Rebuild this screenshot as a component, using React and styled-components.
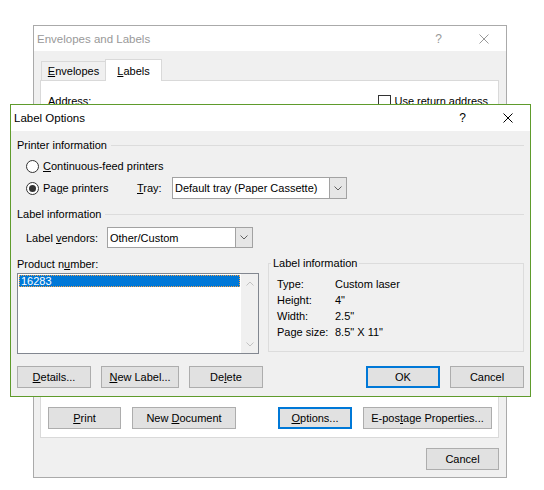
import React from 'react'
import styled, { createGlobalStyle, css } from 'styled-components'

const GlobalStyle = createGlobalStyle`
  html, body {
    margin: 0;
    padding: 0;
    background: #fff;
  }
  body {
    font-family: 'Liberation Sans', Arial, sans-serif;
    font-size: 11px;
    color: #000;
  }
  * {
    box-sizing: border-box;
  }
`

const Desktop = styled.div`
  position: relative;
  width: 544px;
  height: 490px;
  overflow: hidden;
  background: #fff;
`

const Window = styled.div`
  position: absolute;
  left: ${p => p.$left}px;
  top: ${p => p.$top}px;
  width: ${p => p.$width}px;
  height: ${p => p.$height}px;
  border: 1px solid ${p => p.$frame};
  background: #f0f0f0;
  display: flex;
  flex-direction: column;
`

const TitleBar = styled.div`
  display: flex;
  align-items: center;
  height: ${p => p.$height}px;
  flex-shrink: 0;
  background: #fff;
  padding-left: 3px;
  color: ${p => (p.$inactive ? '#999' : '#000')};
`

const TitleText = styled.span`
  flex: 1;
  font-size: 11.5px;
`

const CaptionButton = styled.div`
  width: 45px;
  height: 100%;
  display: flex;
  align-items: center;
  justify-content: center;
  font-size: 12px;
`

/* ---- Envelopes and Labels (behind) ---- */

const BackBody = styled.div`
  flex: 1;
  display: flex;
  flex-direction: column;
  padding: 7px 7px 7px 6px;
`

const TabStrip = styled.div`
  display: flex;
  align-items: flex-end;
  height: 22px;
  padding-left: 1px;
`

const Tab = styled.div`
  display: flex;
  align-items: center;
  justify-content: center;
  border: 1px solid #d9d9d9;
  border-bottom: none;
  ${p =>
    p.$active
      ? css`
          width: 57px;
          height: 22px;
          background: #fff;
          margin-bottom: -1px;
          position: relative;
          z-index: 1;
        `
      : css`
          width: 64px;
          height: 19px;
          background: #f0f0f0;
          border-right: none;
        `}
`

const TabPanel = styled.div`
  flex: 1;
  display: flex;
  flex-direction: column;
  justify-content: space-between;
  background: #fff;
  border: 1px solid #d9d9d9;
  padding: 12px 6px 8px 7px;
`

const AddressRow = styled.div`
  display: flex;
  align-items: center;
  justify-content: space-between;
  height: 16px;
`

const CheckLabel = styled.label`
  display: flex;
  align-items: center;
  gap: 3px;
  margin-right: 4px;
`

const CheckBox = styled.span`
  width: 13px;
  height: 12px;
  border: 1px solid #333;
  background: #fff;
`

const ButtonRow = styled.div`
  display: flex;
  justify-content: space-between;
  align-items: center;
`

const ButtonGroup = styled.div`
  display: flex;
  gap: ${p => p.$gap}px;
`

const Button = styled.div`
  width: ${p => p.$width}px;
  height: 22px;
  display: flex;
  align-items: center;
  justify-content: center;
  background: #e1e1e1;
  border: ${p => (p.$focused ? '2px solid #0078d7' : '1px solid #adadad')};
  white-space: nowrap;
`

const FooterRow = styled.div`
  display: flex;
  justify-content: flex-end;
  margin-top: 10px;
`

/* ---- Label Options (front) ---- */

const OptionsBody = styled.div`
  flex: 1;
  display: flex;
  flex-direction: column;
  padding: 6px 6px 8px;
`

const SectionHeader = styled.div`
  display: flex;
  align-items: center;
  height: 16px;
  margin-top: ${p => p.$top || 0}px;

  &::after {
    content: '';
    flex: 1;
    height: 1px;
    background: #dcdcdc;
    margin-left: 4px;
  }
`

const OptionRow = styled.div`
  display: flex;
  align-items: center;
  height: ${p => p.$height}px;
  margin-top: ${p => p.$top}px;
  padding-left: 9px;
`

const RadioLabel = styled.label`
  display: flex;
  align-items: center;
  gap: 4px;
  width: ${p => (p.$width ? `${p.$width}px` : 'auto')};
`

const Radio = styled.span`
  width: 13px;
  height: 13px;
  border-radius: 50%;
  border: 1px solid #333;
  background: #fff;
  display: flex;
  align-items: center;
  justify-content: center;

  &::after {
    content: '';
    width: 7px;
    height: 7px;
    border-radius: 50%;
    background: ${p => (p.$checked ? '#333' : 'transparent')};
  }
`

const FieldLabel = styled.span`
  width: ${p => p.$width}px;
  flex-shrink: 0;
`

const Combo = styled.div`
  display: flex;
  width: ${p => p.$width}px;
  height: ${p => p.$height}px;
  border: 1px solid #a2a2a2;
  background: #fff;
`

const ComboText = styled.div`
  flex: 1;
  display: flex;
  align-items: center;
  padding-left: 2px;
  white-space: nowrap;
  overflow: hidden;
`

const ComboButton = styled.div`
  width: 17px;
  display: flex;
  align-items: center;
  justify-content: center;
  background: #e6e6e6;
  border-left: 1px solid #a2a2a2;
`

const ProductGrid = styled.div`
  display: grid;
  grid-template-columns: 242px 1fr;
  column-gap: 9px;
  margin-top: 8px;
  height: 98px;
`

const Column = styled.div`
  display: flex;
  flex-direction: column;
`

const Caption = styled.div`
  height: 16px;
  display: flex;
  align-items: center;
`

const ListBox = styled.div`
  display: flex;
  margin-top: 1px;
  height: 81px;
  border: 1px solid #828790;
  background: #fff;
`

const ListItems = styled.div`
  flex: 1;
  padding: 1px;
`

const ListItem = styled.div`
  height: 12px;
  line-height: 12px;
  padding-left: 2px;
  background: ${p => (p.$selected ? '#0078d7' : 'transparent')};
  color: ${p => (p.$selected ? '#fff' : '#000')};
  outline: ${p => (p.$selected ? '1px dotted #f0a04b' : 'none')};
  outline-offset: -1px;
`

const ScrollTrack = styled.div`
  width: 17px;
  display: flex;
  flex-direction: column;
  justify-content: space-between;
  align-items: center;
  background: #f0f0f0;
  padding: 7px 0 6px;
`

const GroupBox = styled.fieldset`
  margin: -1px 0 0;
  padding: 0 0 0 8px;
  height: 97px;
  border: 1px solid #dcdcdc;
  min-width: 0;
`

const GroupLegend = styled.legend`
  padding: 0 2px;
  margin-left: -6px;
  line-height: 16px;
`

const InfoGrid = styled.div`
  display: grid;
  grid-template-columns: 58px 1fr;
  grid-auto-rows: 16px;
  align-items: center;
  padding-top: 5px;
`

const ActionRow = styled.div`
  display: flex;
  justify-content: space-between;
  margin-top: 12px;
`

const CloseIcon = ({ color }) => (
  <svg width="10" height="10" viewBox="0 0 10 10">
    <path d="M0.5 0.5 L9.5 9.5 M9.5 0.5 L0.5 9.5" stroke={color} strokeWidth="1" fill="none" />
  </svg>
)

const Chevron = ({ color = '#606060', up }) => (
  <svg width="8" height="5" viewBox="0 0 8 5">
    <path
      d={up ? 'M0.5 4.5 L4 1 L7.5 4.5' : 'M0.5 0.5 L4 4 L7.5 0.5'}
      stroke={color}
      strokeWidth="1"
      fill="none"
    />
  </svg>
)

const infoRows = [
  ['Type:', 'Custom laser'],
  ['Height:', '4"'],
  ['Width:', '2.5"'],
  ['Page size:', '8.5" X 11"']
]

export default function App() {
  return (
    <Desktop>
      <GlobalStyle />

      <Window $left={33} $top={25} $width={474} $height={453} $frame="#aaaaaa">
        <TitleBar $height={25} $inactive>
          <TitleText>Envelopes and Labels</TitleText>
          <CaptionButton>?</CaptionButton>
          <CaptionButton>
            <CloseIcon color="#999" />
          </CaptionButton>
        </TitleBar>
        <BackBody>
          <TabStrip>
            <Tab>
              <span>
                <u>E</u>nvelopes
              </span>
            </Tab>
            <Tab $active>
              <span>
                <u>L</u>abels
              </span>
            </Tab>
          </TabStrip>
          <TabPanel>
            <AddressRow>
              <span>Address:</span>
              <CheckLabel>
                <CheckBox />
                <span>Use return address</span>
              </CheckLabel>
            </AddressRow>
            <ButtonRow>
              <ButtonGroup $gap={11}>
                <Button $width={73}>
                  <span>
                    <u>P</u>rint
                  </span>
                </Button>
                <Button $width={104}>
                  <span>
                    New <u>D</u>ocument
                  </span>
                </Button>
              </ButtonGroup>
              <ButtonGroup $gap={11}>
                <Button $width={74} $focused>
                  <span>
                    <u>O</u>ptions...
                  </span>
                </Button>
                <Button $width={129}>
                  <span>
                    E-pos<u>t</u>age Properties...
                  </span>
                </Button>
              </ButtonGroup>
            </ButtonRow>
          </TabPanel>
          <FooterRow>
            <Button $width={73}>Cancel</Button>
          </FooterRow>
        </BackBody>
      </Window>

      <Window $left={10} $top={104} $width={521} $height={293} $frame="#5f9b2c">
        <TitleBar $height={26}>
          <TitleText>Label Options</TitleText>
          <CaptionButton>?</CaptionButton>
          <CaptionButton>
            <CloseIcon color="#000" />
          </CaptionButton>
        </TitleBar>
        <OptionsBody>
          <SectionHeader>Printer information</SectionHeader>
          <OptionRow $height={20} $top={3}>
            <RadioLabel>
              <Radio />
              <span>
                <u>C</u>ontinuous-feed printers
              </span>
            </RadioLabel>
          </OptionRow>
          <OptionRow $height={22} $top={1}>
            <RadioLabel $width={111}>
              <Radio $checked />
              <span>
                Pa<u>g</u>e printers
              </span>
            </RadioLabel>
            <FieldLabel $width={35}>
              <u>T</u>ray:
            </FieldLabel>
            <Combo $width={175} $height={22}>
              <ComboText>Default tray (Paper Cassette)</ComboText>
              <ComboButton>
                <Chevron />
              </ComboButton>
            </Combo>
          </OptionRow>

          <SectionHeader $top={7}>Label information</SectionHeader>
          <OptionRow $height={21} $top={5}>
            <FieldLabel $width={81}>
              Label <u>v</u>endors:
            </FieldLabel>
            <Combo $width={146} $height={21}>
              <ComboText>Other/Custom</ComboText>
              <ComboButton>
                <Chevron />
              </ComboButton>
            </Combo>
          </OptionRow>

          <ProductGrid>
            <Column>
              <Caption>
                <span>
                  Product n<u>u</u>mber:
                </span>
              </Caption>
              <ListBox>
                <ListItems>
                  <ListItem $selected>16283</ListItem>
                </ListItems>
                <ScrollTrack>
                  <Chevron up color="#c2c2c2" />
                  <Chevron color="#c2c2c2" />
                </ScrollTrack>
              </ListBox>
            </Column>
            <GroupBox>
              <GroupLegend>Label information</GroupLegend>
              <InfoGrid>
                {infoRows.map(([label, value]) => (
                  <React.Fragment key={label}>
                    <span>{label}</span>
                    <span>{value}</span>
                  </React.Fragment>
                ))}
              </InfoGrid>
            </GroupBox>
          </ProductGrid>

          <ActionRow>
            <ButtonGroup $gap={10}>
              <Button $width={74}>
                <span>
                  <u>D</u>etails...
                </span>
              </Button>
              <Button $width={78}>
                <span>
                  <u>N</u>ew Label...
                </span>
              </Button>
              <Button $width={74}>
                <span>
                  De<u>l</u>ete
                </span>
              </Button>
            </ButtonGroup>
            <ButtonGroup $gap={10}>
              <Button $width={74} $focused>
                OK
              </Button>
              <Button $width={74}>Cancel</Button>
            </ButtonGroup>
          </ActionRow>
        </OptionsBody>
      </Window>
    </Desktop>
  )
}
